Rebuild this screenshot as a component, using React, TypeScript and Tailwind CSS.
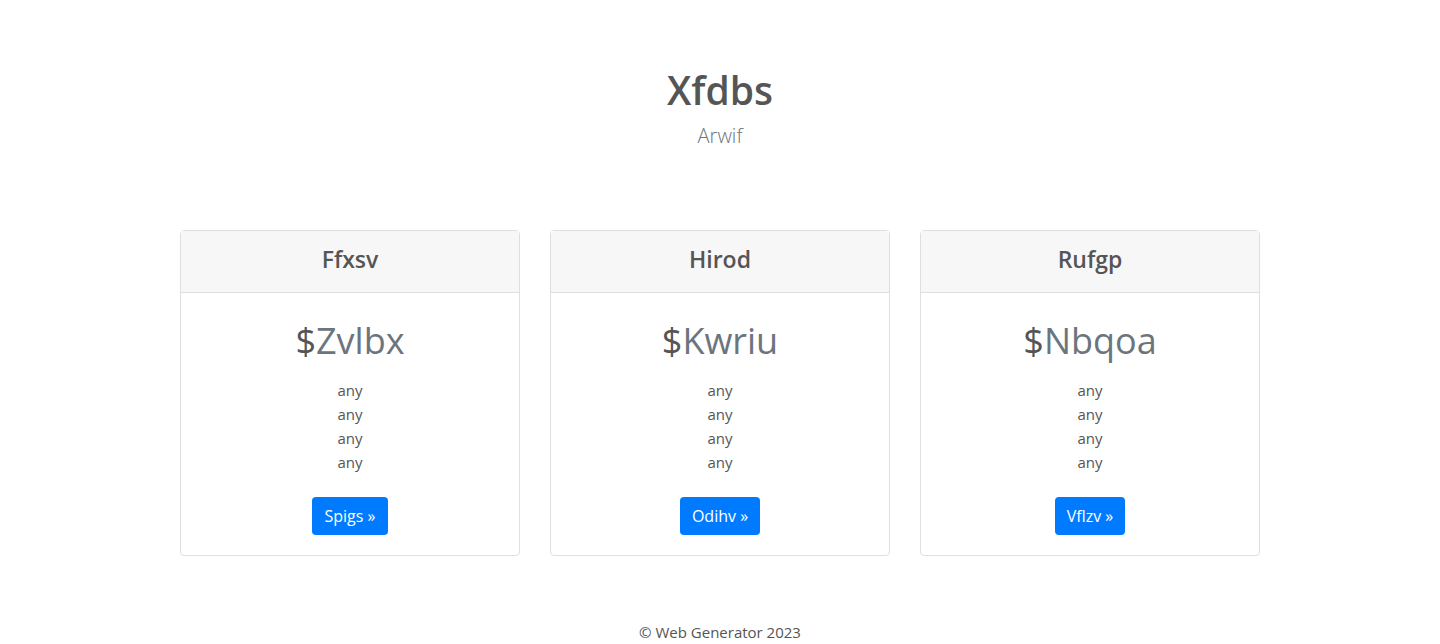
const plans = [
  { id: 1, name: "Ffxsv", price: "Zvlbx", button: "Spigs" },
  { id: 2, name: "Hirod", price: "Kwriu", button: "Odihv" },
  { id: 3, name: "Rufgp", price: "Nbqoa", button: "Vflzv" },
];

export default function App() {
  return (
    <div className="min-h-[644px] bg-white text-[#555] font-['Open_Sans',sans-serif]">
      <div className="pt-[66px] text-center">
        <h1 className="text-[39px] leading-[48px] font-semibold mb-[7px]">Xfdbs</h1>
        <p className="text-[20px] leading-[30px] font-light text-[#6c757d]">Arwif</p>
      </div>

      <div className="mx-auto mt-[79px] grid w-[1080px] grid-cols-3 gap-[30px]">
        {plans.map(function (plan) {
          return (
            <div key={plan.id} className="rounded border border-[#dfdfdf] bg-white text-center">
              <div className="border-b border-[#dfdfdf] bg-[#f7f7f7] pt-[14px] pb-[19px]">
                <h4 className="text-[23px] leading-[28px] font-semibold">{plan.name}</h4>
              </div>
              <div className="pt-6 pb-5">
                <h1 className="text-[36px] leading-[48px] mb-[13px]">
                  $<span className="text-[#6c757d]">{plan.price}</span>
                </h1>
                <ul className="text-[15px] leading-6 mb-[23px]">
                  <li>any</li>
                  <li>any</li>
                  <li>any</li>
                  <li>any</li>
                </ul>
                <button className="h-[38px] rounded bg-[#007bff] px-3 text-[16px] text-white">
                  {plan.button} »
                </button>
              </div>
            </div>
          );
        })}
      </div>

      <footer className="mt-16 text-center text-[15px] leading-6">© Web Generator 2023</footer>
    </div>
  );
}
